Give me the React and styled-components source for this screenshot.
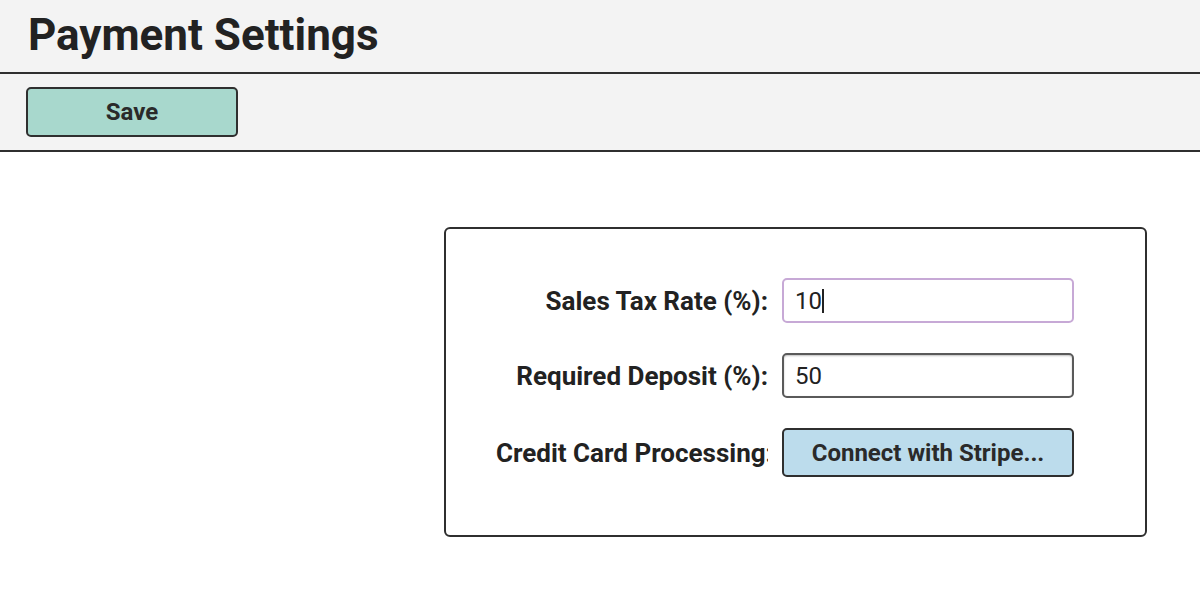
import React from "react";
import styled, { createGlobalStyle } from "styled-components";

const GlobalStyle = createGlobalStyle`
  body {
    margin: 0;
    background: #ffffff;
    font-family: Roboto, "Liberation Sans", sans-serif;
    color: #222222;
  }
`;

// Page header with title
const Header = styled.header`
  background-color: #f3f3f3;
  height: 74px;
  border-bottom: 2px solid #2f2f2f;
  display: flex;
  align-items: center;
  padding: 0 0 2px 28px;
  box-sizing: border-box;
`;

const Title = styled.h1`
  margin: 0;
  font-size: 44px;
  font-weight: 700;
  color: #222222;
`;

// Toolbar under the header
const Toolbar = styled.div`
  background-color: #f3f3f3;
  height: 78px;
  border-bottom: 2px solid #2f2f2f;
  display: flex;
  align-items: center;
  padding-left: 26px;
  box-sizing: border-box;
`;

const Button = styled.button`
  font-family: Roboto, "Liberation Sans", sans-serif;
  font-size: 24px;
  font-weight: 700;
  color: #2a2a2a;
  background-color: ${(props) => props.bg};
  border: 2px solid #2f2f2f;
  border-radius: 5px;
  width: ${(props) => props.width}px;
  height: ${(props) => props.height}px;
  padding: 0;
  cursor: pointer;
`;

const Content = styled.main`
  padding: 75px 0 0 444px;
`;

const Card = styled.section`
  width: 703px;
  height: 310px;
  box-sizing: border-box;
  border: 2px solid #2f2f2f;
  border-radius: 6px;
  padding: 49px 0 0 50px;
  display: grid;
  grid-template-columns: 272px 292px;
  column-gap: 14px;
  row-gap: 30px;
  align-items: center;
  align-content: start;
`;

// labels are right aligned; a too-long one is cut at the column edge
const Label = styled.label`
  font-size: 26px;
  font-weight: 700;
  color: #222222;
  text-align: right;
  white-space: nowrap;
  overflow: hidden;
`;

const InputWrap = styled.div`
  position: relative;
  height: 45px;
`;

const Input = styled.input`
  width: 100%;
  height: 100%;
  box-sizing: border-box;
  font-family: Roboto, "Liberation Sans", sans-serif;
  font-size: 24px;
  color: #222222;
  padding: 0 11px;
  border-radius: 5px;
  border: 2px solid ${(props) => (props.focused ? "#c7a9d6" : "#5a5a5a")};
  box-shadow: ${(props) =>
    props.focused ? "none" : "inset 0 1px 2px rgba(0, 0, 0, 0.25)"};
  outline: none;
  background: #ffffff;
`;

// fake text caret, sits over the focused input
const Caret = styled.span`
  position: absolute;
  left: ${(props) => props.left}px;
  top: 11px;
  width: 1.5px;
  height: 24px;
  background: #222222;
`;

const App = () => {
  return (
    <>
      <GlobalStyle />
      <Header>
        <Title>Payment Settings</Title>
      </Header>
      <Toolbar>
        <Button type="button" bg="#a8d8cd" width={212} height={50}>
          Save
        </Button>
      </Toolbar>
      <Content>
        <Card>
          <Label>Sales Tax Rate (%):</Label>
          <InputWrap>
            <Input focused type="text" defaultValue="10" readOnly />
            <Caret left={40} />
          </InputWrap>

          <Label>Required Deposit (%):</Label>
          <InputWrap>
            <Input type="text" defaultValue="50" readOnly />
          </InputWrap>

          <Label>Credit Card Processing:</Label>
          <Button type="button" bg="#bcdcec" width={292} height={49}>
            Connect with Stripe...
          </Button>
        </Card>
      </Content>
    </>
  );
};

export default App;
